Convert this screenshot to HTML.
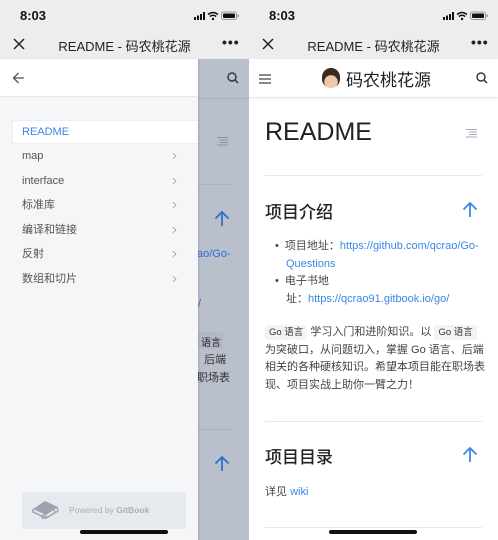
<!DOCTYPE html>
<html><head><meta charset="utf-8"><style>
*{margin:0;padding:0;box-sizing:border-box}
body{width:498px;height:540px;overflow:hidden;background:#fff;font-family:"Liberation Sans","Noto Sans CJK SC",sans-serif;position:relative}
.p{position:absolute;top:0;width:249px;height:540px;overflow:hidden;background:#fff}
.a{position:absolute;white-space:nowrap}
.sb{position:absolute;left:0;top:0;width:249px;height:59px;background:#ededed}
.time{left:20px;top:8px;font-size:13px;font-weight:bold;color:#111}
.title{left:0;width:249px;text-align:center;top:36px;font-size:13px;color:#222}
.link{color:#3b87e8}
.txt{font-size:11px;color:#444}
.code{background:#f2f3f5;border-radius:3px;font-size:9.5px;padding:2px 4px;color:#333}
.hr{position:absolute;left:16px;right:16px;height:1px;background:#e6e9ec}
</style></head><body>

<!-- RIGHT PANEL -->
<div class="p" style="left:249px">
 <div class="sb"></div>
 <div class="a time">8:03</div>
 <svg class="a" style="left:194px;top:11px" width="46" height="10"><rect x="0" y="6" width="2" height="3" fill="#111"/><rect x="3" y="4.5" width="2" height="4.5" fill="#111"/><rect x="6" y="3" width="2" height="6" fill="#111"/><rect x="9" y="1" width="2" height="8" fill="#111"/><path d="M14 3.5 Q19 -0.5 24 3.5 M15.8 5.5 Q19 3 22.2 5.5" stroke="#111" stroke-width="1.5" fill="none"/><circle cx="19" cy="8" r="1.2" fill="#111"/><rect x="27.5" y="1" width="15" height="7.5" rx="2" fill="none" stroke="#999" stroke-width="1"/><rect x="29" y="2.5" width="12" height="4.5" rx="1" fill="#111"/><rect x="43.5" y="3.5" width="1.5" height="2.5" fill="#999"/></svg>
 <svg class="a" style="left:13px;top:38px" width="12" height="12"><path d="M1 1L11 11M11 1L1 11" stroke="#222" stroke-width="1.5"/></svg>
 <div class="a title">README - 码农桃花源</div>
 <div class="a" style="left:222px;top:34px;font-size:14px;letter-spacing:1px;font-weight:bold;color:#222">•••</div>
 <div class="a" style="left:0;top:59px;width:249px;height:39px;background:#fff;border-bottom:1px solid #e3e6ea;box-shadow:0 1px 2px rgba(0,0,0,.05)"></div>
 <svg class="a" style="left:10px;top:74px" width="12" height="10"><path d="M0 1H12M0 5H12M0 9H12" stroke="#444" stroke-width="1.3"/></svg>
 <div class="a" style="left:73px;top:68px;width:18px;height:20px;border-radius:9px;background:radial-gradient(circle at 50% 70%,#f0c8a8 40%,#3a2a20 42%)"></div>
 <div class="a" style="left:97px;top:66px;font-size:17px;color:#222">码农桃花源</div>
 <svg class="a" style="left:227px;top:72px" width="12" height="12"><circle cx="5" cy="5" r="4" stroke="#333" stroke-width="1.4" fill="none"/><path d="M8 8L11 11" stroke="#333" stroke-width="1.5"/></svg>
 <div class="a" style="left:16px;top:118px;font-size:25px;color:#222;font-weight:500">README</div>
 <svg class="a" style="left:217px;top:129px" width="11" height="9"><path d="M0 .5H11M3 3H11M3 5.5H11M0 8H11" stroke="#aab" stroke-width="1"/></svg>
 <div class="hr" style="top:175px"></div>
 <div class="a" style="left:16px;top:198px;font-size:17px;color:#222;font-weight:500">项目介绍</div>
 <svg class="a" style="left:213px;top:201px" width="16" height="17"><path d="M8 16V2M1.5 8.5L8 2L14.5 8.5" stroke="#3b87e8" stroke-width="1.8" fill="none"/></svg>
 <div class="a txt" style="left:26px;top:238px;line-height:17.5px">• <span style="margin-left:3px">项目地址：</span><span class="link">https://github.com/qcrao/Go-</span><br><span style="margin-left:11px" class="link">Questions</span><br>• <span style="margin-left:3px">电子书地</span><br><span style="margin-left:11px">址：</span><span class="link">https://qcrao91.gitbook.io/go/</span></div>
 <div class="a txt" style="left:16px;top:324px;line-height:17.6px"><span class="code">Go 语言</span> 学习入门和进阶知识。以 <span class="code">Go 语言</span><br>为突破口，从问题切入，掌握 Go 语言、后端<br>相关的各种硬核知识。希望本项目能在职场表<br>现、项目实战上助你一臂之力！</div>
 <div class="hr" style="top:421px"></div>
 <div class="a" style="left:16px;top:443px;font-size:17px;color:#222;font-weight:500">项目目录</div>
 <svg class="a" style="left:213px;top:446px" width="16" height="17"><path d="M8 16V2M1.5 8.5L8 2L14.5 8.5" stroke="#3b87e8" stroke-width="1.8" fill="none"/></svg>
 <div class="a txt" style="left:16px;top:483px">详见 <span class="link">wiki</span></div>
 <div class="hr" style="top:527px"></div>
 <div class="a" style="left:80px;top:530px;width:88px;height:4px;border-radius:2px;background:#111"></div>
</div>

<!-- LEFT PANEL -->
<div class="p" style="left:0;background:#b9bfcb">
 <div class="sb"></div>
 <div class="a time">8:03</div>
 <svg class="a" style="left:194px;top:11px" width="46" height="10"><rect x="0" y="6" width="2" height="3" fill="#111"/><rect x="3" y="4.5" width="2" height="4.5" fill="#111"/><rect x="6" y="3" width="2" height="6" fill="#111"/><rect x="9" y="1" width="2" height="8" fill="#111"/><path d="M14 3.5 Q19 -0.5 24 3.5 M15.8 5.5 Q19 3 22.2 5.5" stroke="#111" stroke-width="1.5" fill="none"/><circle cx="19" cy="8" r="1.2" fill="#111"/><rect x="27.5" y="1" width="15" height="7.5" rx="2" fill="none" stroke="#999" stroke-width="1"/><rect x="29" y="2.5" width="12" height="4.5" rx="1" fill="#111"/><rect x="43.5" y="3.5" width="1.5" height="2.5" fill="#999"/></svg>
 <svg class="a" style="left:13px;top:38px" width="12" height="12"><path d="M1 1L11 11M11 1L1 11" stroke="#222" stroke-width="1.5"/></svg>
 <div class="a title">README - 码农桃花源</div>
 <div class="a" style="left:222px;top:34px;font-size:14px;letter-spacing:1px;font-weight:bold;color:#222">•••</div>
 <div class="a" style="left:198px;top:98px;width:51px;height:1px;background:#a8aebb"></div>
 <svg class="a" style="left:227px;top:72px" width="12" height="12"><circle cx="5" cy="5" r="4" stroke="#333" stroke-width="1.4" fill="none"/><path d="M8 8L11 11" stroke="#333" stroke-width="1.5"/></svg>
 <svg class="a" style="left:217px;top:137px" width="11" height="9"><path d="M0 .5H11M3 3H11M3 5.5H11M0 8H11" stroke="#8c93a0" stroke-width="1"/></svg>
 <div class="a" style="left:198px;top:184px;width:35px;height:1px;background:#aab0bc"></div>
 <svg class="a" style="left:214px;top:210px" width="16" height="17"><path d="M8 16V2M1.5 8.5L8 2L14.5 8.5" stroke="#2f6fd0" stroke-width="1.8" fill="none"/></svg>
 <div class="a" style="left:197px;top:248px;font-size:11px;color:#2f6fd0">ao/Go-</div>
 <div class="a" style="left:198px;top:298px;font-size:11px;color:#2f6fd0">/</div>
 <div class="a" style="left:198px;top:332px;width:25px;height:17px;background:#b2b8c4"></div>
 <div class="a" style="left:201px;top:334px;font-size:10px;color:#222">语言</div>
 <div class="a" style="left:204px;top:351px;font-size:11px;color:#333">后端</div>
 <div class="a" style="left:197px;top:369px;font-size:11px;color:#333">职场表</div>
 <div class="a" style="left:198px;top:429px;width:35px;height:1px;background:#aab0bc"></div>
 <svg class="a" style="left:214px;top:455px" width="16" height="17"><path d="M8 16V2M1.5 8.5L8 2L14.5 8.5" stroke="#2f6fd0" stroke-width="1.8" fill="none"/></svg>
 <div class="a" style="left:0;top:59px;width:198px;height:481px;background:#f5f6f8;box-shadow:1px 0 2px rgba(0,0,0,.12)"></div>
 <div class="a" style="left:0;top:59px;width:198px;height:38px;background:#fff;border-bottom:1px solid #e3e6ea"></div>
 <svg class="a" style="left:12px;top:72px" width="13" height="12"><path d="M12 6H1.5M6.5 1L1.5 6L6.5 11" stroke="#555" stroke-width="1.3" fill="none"/></svg>
 <div class="a" style="left:12px;top:120px;width:186px;height:24px;background:#fff;border:1px solid #eceef1;border-right:none"></div>
 <div class="a" style="left:22px;top:125px;font-size:11px;color:#3b87e8;line-height:14px">README</div>
 <div class="a" style="left:22px;top:144px;font-size:11px;color:#555;line-height:24.6px">map<br>interface<br>标准库<br>编译和链接<br>反射<br>数组和切片</div>
 <div class="a" style="left:171px;top:144px;font-size:12px;color:#999;line-height:24.6px;transform:scaleX(.6)">&gt;<br>&gt;<br>&gt;<br>&gt;<br>&gt;<br>&gt;</div>
 <div class="a" style="left:22px;top:492px;width:164px;height:37px;background:#e6e9ed;border-radius:2px"></div>
 <svg class="a" style="left:31px;top:499px" width="29" height="20"><path d="M2 10L14 2L27 8L15 16Z" fill="#9aa3ae"/><path d="M2 10V13L15 19L27 12" stroke="#9aa3ae" stroke-width="1.5" fill="none"/><circle cx="25" cy="11" r="2" fill="none" stroke="#9aa3ae" stroke-width="1.2"/><circle cx="13" cy="18" r="2" fill="none" stroke="#9aa3ae" stroke-width="1.2"/></svg>
 <div class="a" style="left:69px;top:505px;font-size:8.5px;color:#a8b0ba">Powered by <b>GitBook</b></div>
 <div class="a" style="left:80px;top:530px;width:88px;height:4px;border-radius:2px;background:#111"></div>
</div>
</body></html>
